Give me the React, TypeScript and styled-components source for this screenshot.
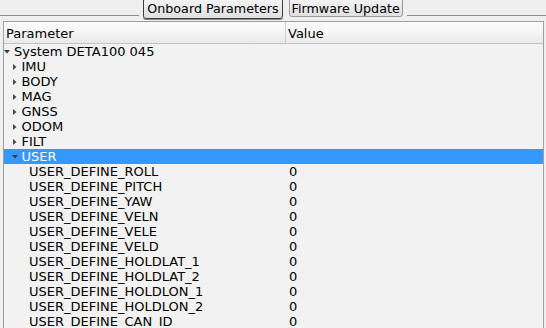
import React from "react";
import styled, { createGlobalStyle } from "styled-components";

const Global = createGlobalStyle`
  html, body { margin: 0; padding: 0; }
  body {
    background: #efefef;
    font-family: "DejaVu Sans", "Liberation Sans", sans-serif;
    font-size: 13px;
    color: #000;
    width: 546px;
    height: 328px;
    overflow: hidden;
  }
`;

const Page = styled.div`
  display: flex;
  flex-direction: column;
  width: 546px;
  height: 328px;
`;

const TabBar = styled.div`
  display: flex;
  align-items: flex-start;
  height: 21px;
`;

const TabLine = styled.div`
  flex: 1;
  height: 15px;
  border-bottom: 1px solid #8c8c8c;
`;

const Tabs = styled.div`
  display: flex;
  gap: 6px;
  padding: 0 4px;
  margin-top: -2px;
`;

const Tab = styled.div<{ $active?: boolean }>`
  box-sizing: border-box;
  height: ${(p) => (p.$active ? 21 : 19)}px;
  padding: 2px ${(p) => (p.$active ? 3 : 2)}px 0;
  border: 1px solid ${(p) => (p.$active ? "#3c3c3c" : "#9a9a9a")};
  border-radius: 0 0 3px 3px;
  background: linear-gradient(#f4f4f4, #e0e0e0);
  font-size: 12.7px;
  line-height: 16px;
  white-space: nowrap;
  box-shadow: ${(p) => (p.$active ? "0 1px 0 #8a8a8a" : "none")};
`;

const Tree = styled.div`
  margin-left: 3px;
  width: 541px;
  box-sizing: border-box;
  flex: 1;
  border: 1px solid #a0a0a0;
  border-bottom: none;
  background: #f2f2f2;
  overflow: hidden;
`;

const Header = styled.div`
  display: grid;
  grid-template-columns: 282px 1fr;
  height: 21px;
  border-bottom: 1px solid #c4c4c4;
  background: linear-gradient(#fbfbfb 0%, #f6f6f6 45%, #e9e9e9 100%);
`;

const HeaderCell = styled.div<{ $divider?: boolean }>`
  display: flex;
  align-items: center;
  padding-left: 2px;
  padding-top: 1px;
  border-right: ${(p) => (p.$divider ? "1px solid #cfcfcf" : "none")};
`;

const Row = styled.div<{ $selected?: boolean }>`
  display: grid;
  grid-template-columns: 282px 1fr;
  height: 15px;
  line-height: 15px;
  background: ${(p) => (p.$selected ? "#3399ff" : "transparent")};
  color: ${(p) => (p.$selected ? "#fff" : "#000")};
  white-space: nowrap;
`;

const NameCell = styled.div<{ $depth: number }>`
  display: flex;
  align-items: center;
  padding-left: ${(p) => p.$depth * 7.5}px;
`;

const Arrow = styled.span`
  display: inline-flex;
  width: 6px;
  height: 15px;
  align-items: center;
  justify-content: center;
  margin-right: 4px;
`;

const Spacer = styled.span`
  display: inline-block;
  width: 10px;
`;

const ValueCell = styled.div`
  padding-left: 3px;
`;

type Node = { name: string; depth: number; arrow?: "down" | "right"; value?: string; selected?: boolean };

const nodes: Node[] = [
  { name: "System DETA100 045", depth: 0, arrow: "down" },
  { name: "IMU", depth: 1, arrow: "right" },
  { name: "BODY", depth: 1, arrow: "right" },
  { name: "MAG", depth: 1, arrow: "right" },
  { name: "GNSS", depth: 1, arrow: "right" },
  { name: "ODOM", depth: 1, arrow: "right" },
  { name: "FILT", depth: 1, arrow: "right" },
  { name: "USER", depth: 1, arrow: "down", selected: true },
  ...[
    "USER_DEFINE_ROLL",
    "USER_DEFINE_PITCH",
    "USER_DEFINE_YAW",
    "USER_DEFINE_VELN",
    "USER_DEFINE_VELE",
    "USER_DEFINE_VELD",
    "USER_DEFINE_HOLDLAT_1",
    "USER_DEFINE_HOLDLAT_2",
    "USER_DEFINE_HOLDLON_1",
    "USER_DEFINE_HOLDLON_2",
    "USER_DEFINE_CAN_ID",
  ].map((n) => ({ name: n, depth: 2, value: "0" })),
];

const Tri = ({ dir }: { dir: "down" | "right" }) =>
  dir === "down" ? (
    <svg width="6" height="4" viewBox="0 0 6 4">
      <path d="M0 0 H6 L3 3.5 Z" fill="#3a3a3a" />
    </svg>
  ) : (
    <svg width="4" height="6" viewBox="0 0 4 6">
      <path d="M0 0 V6 L3.5 3 Z" fill="#4a4a4a" />
    </svg>
  );

export default function App() {
  return (
    <>
      <Global />
      <Page>
        <TabBar>
          <TabLine />
          <Tabs>
            <Tab $active>Onboard Parameters</Tab>
            <Tab>Firmware Update</Tab>
          </Tabs>
          <TabLine />
        </TabBar>
        <Tree>
          <Header>
            <HeaderCell $divider>Parameter</HeaderCell>
            <HeaderCell>Value</HeaderCell>
          </Header>
          {nodes.map((n) => (
            <Row key={n.name} $selected={n.selected}>
              <NameCell $depth={n.depth}>
                {n.arrow ? (
                  <Arrow>
                    <Tri dir={n.arrow} />
                  </Arrow>
                ) : (
                  <Spacer />
                )}
                {n.name}
              </NameCell>
              <ValueCell>{n.value ?? ""}</ValueCell>
            </Row>
          ))}
        </Tree>
      </Page>
    </>
  );
}
